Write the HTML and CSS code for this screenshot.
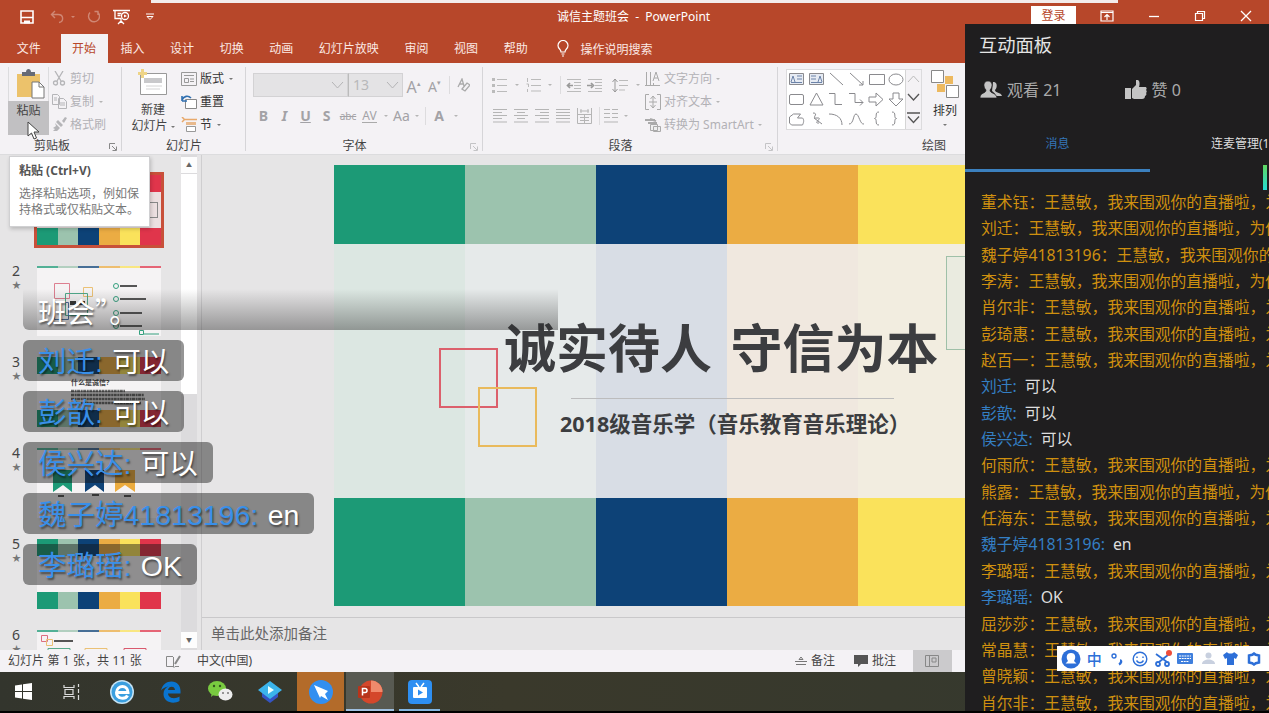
FILE: index.html
```html
<!DOCTYPE html>
<html lang="zh-CN">
<head>
    <meta charset="UTF-8">
    <meta name="viewport" content="width=device-width, initial-scale=1.0">
    <title>诚信主题班会 - PowerPoint</title>
    <link rel="stylesheet" href="styles.css">
</head>
<body>
<div class="desktop">
    <header class="titlebar">
        <div class="quick">
            <svg width="14" height="14" viewBox="0 0 14 14" fill="none" stroke="#fff" stroke-width="1.6"><path d="M1 1h12v12H1zM1 7.5h12"/><path d="M4 10.5h6v3H4z" fill="#fff" stroke="none"/></svg>
            <svg class="dim undo" width="14" height="14" viewBox="0 0 14 14" fill="none" stroke="#fff" stroke-width="1.4"><path d="M5 1L1.5 4.5 5 8M2 4.5h6c6 0 6 7 1 8"/></svg>
            <svg class="dim dot" width="6" height="4" viewBox="0 0 6 4" fill="#fff"><path d="M1 1h4L3 3z"/></svg>
            <svg class="dim redo" width="14" height="14" viewBox="0 0 14 14" fill="none" stroke="#fff" stroke-width="1.4"><path d="M8.500 1.500H12V5M11.500 2A5.500 5.500 0 1 1 4 2.500"/></svg>
            <svg class="show" width="17" height="16" viewBox="0 0 17 16" fill="none" stroke="#fff" stroke-width="1.3"><path d="M0 1.500h17M2 1.500v8h6M8 9v5M5 15l3-3 3 3M4.500 4.500h4M4.500 6.500h3"/><circle cx="12" cy="7" r="3.500"/><path d="M11 5.500l3 1.500-3 1.500z" fill="#fff" stroke="none"/></svg>
            <svg width="8" height="8" viewBox="0 0 8 8" fill="none" stroke="#fff"><path d="M0 1h8M1 3.500h6L4 6.500z"/></svg>
        </div>
        <div class="doc-name">诚信主题班会 &nbsp;- &nbsp;PowerPoint</div>
        <div class="window-buttons">
            <span class="login">登录</span>
            <svg width="14" height="12" viewBox="0 0 14 12" fill="none" stroke="#fff" stroke-width="1.2"><path d="M1 1h12v10H1zM1 2.500h12M7 10V4.500M4.500 7L7 4.500 9.500 7"/></svg>
            <svg width="12" height="12" viewBox="0 0 12 12" stroke="#fff" stroke-width="1.3"><path d="M1 6.500h10"/></svg>
            <svg width="12" height="12" viewBox="0 0 12 12" fill="none" stroke="#fff" stroke-width="1.2"><path d="M1.500 3.500h7v7h-7zM3.500 3V1.500h7v7H9"/></svg>
            <svg width="12" height="12" viewBox="0 0 12 12" stroke="#fff" stroke-width="1.3"><path d="M1 1l10 10M11 1L1 11"/></svg>
        </div>
    </header>
    <div class="share-strip"></div>

    <nav class="tabs">
        <span class="tab file">文件</span>
        <span class="tab active">开始</span>
        <span class="tab">插入</span>
        <span class="tab">设计</span>
        <span class="tab">切换</span>
        <span class="tab">动画</span>
        <span class="tab">幻灯片放映</span>
        <span class="tab">审阅</span>
        <span class="tab">视图</span>
        <span class="tab">帮助</span>
        <svg class="bulb" width="12" height="17" viewBox="0 0 12 17" fill="none" stroke="#fff" stroke-width="1.2"><path d="M4 12C4 9 1 9 1 5.500a5 5 0 0 1 10 0C11 9 8 9 8 12zM4.500 14h3M5 16h2"/></svg>
        <span>操作说明搜索</span>
    </nav>

    <section class="ribbon">
        <div class="group clipboard">
            <div class="group-body">
                <div class="paste">
                    <div class="paste-icon">
                        <svg width="28" height="30" viewBox="0 0 28 30"><path d="M0 5h23v23H0z" fill="#ecc26b"/><path d="M5 3h4c0-4 5-4 5 0h4v4H5z" fill="#666a76"/><path d="M15 13h7l5 5v11H15z" fill="#fff" stroke="#777"/><path d="M22 13v5h5" fill="none" stroke="#777"/></svg>
                    </div>
                    <div class="paste-label">粘贴</div>
                </div>
                <div class="commands off">
                    <div><svg width="15" height="15" viewBox="0 0 15 15" fill="none" stroke="#b5b5b8" stroke-width="1.300"><path d="M3 0l6 10M11 0L5 10"/><circle cx="3.500" cy="12" r="2"/><circle cx="10.500" cy="12" r="2"/></svg><span>剪切</span></div>
                    <div><svg width="15" height="15" viewBox="0 0 15 15" fill="none" stroke="#b5b5b8"><path d="M.5.500h5l2 2v8h-7zM6.500 4.500h5l3 3v7h-8z"/><path d="M8 9h5M8 11h5M2 4h3M2 6h3"/></svg><span>复制</span><b class="caret far"></b></div>
                    <div><svg width="15" height="15" viewBox="0 0 15 15" fill="#b5b5b8"><path d="M10 4l3-4 2 1-3 5zM6 3l5 5-2 2-5-5zM3 6l5 5-3 3H1l2-2-2-1 3-2z"/></svg><span>格式刷</span></div>
                </div>
            </div>
            <div class="group-name">剪贴板</div>
            <svg class="launcher" width="8" height="8" viewBox="0 0 8 8" fill="none" stroke="#888"><path d="M.5 6V.5H6M3 3l4 4M7.500 3.500v4h-4"/></svg>
        </div>

        <div class="group slides">
            <div class="group-body">
                <div class="new-slide">
                    <svg width="30" height="28" viewBox="0 0 30 28"><path d="M2.500 4.500h26v21h-26z" fill="#fff" stroke="#999"/><path d="M6 9h18v5H6z" fill="#c9c9cb"/><path d="M8 17h16M8 20h14" stroke="#d4d4d4"/><path d="M0 3h3V0h3v3h3v3H6v3H3V6H0z" fill="#eed487"/></svg>
                    <span>新建</span>
                    <span>幻灯片<b class="caret"></b></span>
                </div>
                <div class="commands">
                    <div><svg width="16" height="14" viewBox="0 0 16 14" fill="none" stroke="#999"><path d="M.5.500h15v13H.5zM3 3.500h10M3.500 6.500h4v4h-4zM9 7h4M9 9.500h4"/></svg><span>版式</span><b class="caret"></b></div>
                    <div><svg width="16" height="14" viewBox="0 0 16 14" fill="none"><path d="M4.500 4.500h11v9h-11z" fill="#fff" stroke="#888"/><path d="M1 6V1M1 6h5M1 5c2-4 6-5 9-2" stroke="#2f6fb0" stroke-width="1.600"/></svg><span>重置</span></div>
                    <div><svg width="16" height="15" viewBox="0 0 16 15" fill="none"><path d="M4 2.500h12M1 0l3 3M1 5l3-3" stroke="#e8a96b" stroke-width="1.500"/><path d="M5 5h10v3H5z" fill="#e8b98c"/><path d="M5.500 9.500h9v5h-9z" fill="#fff" stroke="#999"/></svg><span>节</span><b class="caret"></b></div>
                </div>
            </div>
            <div class="group-name">幻灯片</div>
        </div>

        <div class="group font">
            <div class="group-body rows">
                <div class="row font-row1">
                    <div class="combo"><svg width="13" height="8" viewBox="0 0 13 8" fill="none" stroke="#b4b4b6"><path d="M1 1l5.500 6L12 1"/></svg></div>
                    <div class="combo size">13<svg width="13" height="8" viewBox="0 0 13 8" fill="none" stroke="#b4b4b6"><path d="M1 1l5.500 6L12 1"/></svg></div>
                    <span class="grow">A<sup>▴</sup></span>
                    <span class="shrink">A<sup>▾</sup></span>
                    <i class="sep"></i>
                    <svg width="13" height="14" viewBox="0 0 13 14" fill="none" stroke="#aaa" stroke-width="1.300"><path d="M1 9L5 1l2 7M2.500 6h4M5 11l5-6 3 2-5 6z"/></svg>
                </div>
                <div class="row font-row2">
                    <b>B</b><b class="italic">I</b><b class="under">U</b><b>S</b><s>abc</s><span class="kern">AV</span><b class="caret"></b><span>Aa</span><b class="caret"></b><i class="sep"></i><b>A</b><b class="caret"></b>
                </div>
            </div>
            <div class="group-name">字体</div>
            <svg class="launcher" width="8" height="8" viewBox="0 0 8 8" fill="none" stroke="#c4c4c6"><path d="M.5 6V.5H6M3 3l4 4M7.500 3.500v4h-4"/></svg>
        </div>

        <div class="group paragraph">
            <div class="group-body">
                <div class="rows">
                    <div class="row par-row1">
                        <svg width="16" height="15" viewBox="0 0 16 15" stroke="#bbb"><path d="M5 1.500h10M5 7.500h10M5 13.500h10"/><path d="M0 1.500h3M0 7.500h3M0 13.500h3" stroke-width="3"/></svg>
                        <b class="caret"></b>
                        <svg width="16" height="14" viewBox="0 0 16 14" stroke="#bbb" fill="none"><path d="M5 1.500h10M5 7.500h10M5 13h10M1.500 0v4M.5 6h2v3M1.500 11v3"/></svg>
                        <b class="caret"></b>
                        <i class="sep"></i>
                        <svg width="16" height="15" viewBox="0 0 16 15" stroke="#bbb" fill="none"><path d="M1 1.500h14M8 4.500h7M8 7.500h7M8 10.500h7M1 13.500h14"/><path d="M7 7.500H2M4 5L1.500 7.500 4 10" stroke="#999" stroke-width="1.700"/></svg>
                        <svg width="16" height="15" viewBox="0 0 16 15" stroke="#bbb" fill="none"><path d="M1 1.500h14M8 4.500h7M8 7.500h7M8 10.500h7M1 13.500h14"/><path d="M0 7.500h5M4 5l2.500 2.500L4 10" stroke="#999" stroke-width="1.700"/></svg>
                        <svg width="16" height="15" viewBox="0 0 16 15" stroke="#bbb" fill="none"><path d="M7 2.500h9M7 7.500h9M7 12h6"/><path d="M3 1v13M.5 4L3 1l2.500 3M.5 11L3 14l2.500-3" stroke="#999"/></svg>
                        <b class="caret"></b>
                    </div>
                    <div class="row par-row2">
                        <svg width="15" height="16" viewBox="0 0 15 16" stroke="#b5b5b5"><path d="M0 1.500h14M0 4.500h9M0 7.500h14M0 10.500h9M0 14h14"/></svg>
                        <svg width="15" height="16" viewBox="0 0 15 16" stroke="#b5b5b5"><path d="M0 1.500h14M3 4.500h8M0 7.500h14M3 10.500h8M0 14h14"/></svg>
                        <svg width="15" height="16" viewBox="0 0 15 16" stroke="#b5b5b5"><path d="M0 1.500h14M5 4.500h9M0 7.500h14M5 10.500h9M0 14h14"/></svg>
                        <svg width="15" height="16" viewBox="0 0 15 16" stroke="#b5b5b5"><path d="M0 1.500h14M0 4.500h14M0 7.500h14M0 10.500h14M0 14h14"/></svg>
                        <svg width="15" height="16" viewBox="0 0 15 16" stroke="#b5b5b5" fill="none"><path d="M.5 0v15.500h14V0M.5 6.500h14M3 3h9M4 1v4M11 1v4M3 9.500h9M3 12.500h9M7.500 7v8"/></svg>
                        <i class="sep"></i>
                        <svg width="15" height="16" viewBox="0 0 15 16" stroke="#b5b5b5"><path d="M0 1.500h6M8 1.500h6M0 5.500h6M8 5.500h6M0 9.500h6M8 9.500h6M0 14h14"/></svg>
                        <b class="caret"></b>
                    </div>
                </div>
                <div class="commands off">
                    <div><svg width="16" height="16" viewBox="0 0 16 16" fill="none" stroke="#aaa"><path d="M1.500 1v13M5.500 1v13M0 14.500h15M8 10l3-9 3 9M9 7h4M8.500 12v3"/></svg><span>文字方向</span><b class="caret"></b></div>
                    <div><svg width="16" height="16" viewBox="0 0 16 16" fill="none" stroke="#aaa"><path d="M4 .5H.5v15H4M12 .5h3.500v15H12"/><path d="M8 2v12M5.500 5L8 2l2.500 3M5.500 11L8 14l2.500-3M4 8h8"/></svg><span>对齐文本</span><b class="caret"></b></div>
                    <div><svg width="16" height="14" viewBox="0 0 16 14" fill="none" stroke="#aaa"><path d="M0 2h10M3 5h9M5 1l6 2" stroke-width="2"/><path d="M5.500 6.500h7v6h-7zM8.500 8.500h7v5h-7z" fill="#eee"/></svg><span>转换为 SmartArt</span><b class="caret"></b></div>
                </div>
            </div>
            <div class="group-name">段落</div>
            <svg class="launcher" width="8" height="8" viewBox="0 0 8 8" fill="none" stroke="#c4c4c6"><path d="M.5 6V.5H6M3 3l4 4M7.500 3.500v4h-4"/></svg>
        </div>

        <div class="group drawing">
            <div class="group-body">
                <div class="gallery">
                    <svg width="118" height="59" viewBox="0 0 118 59" fill="none" stroke="#8a8a8e">
                        <path d="M2.500 3.500h14v11h-14zM22.500 3.500h14v11h-14z" fill="#e6ebf3"/>
                        <path d="M4 12l2-6 2 6M10 6h5M10 9h5M4 12.500h11M29 6h-5M29 9h-5M31 12l2-6 2 6M24 12.500h11" stroke="#6c83a8"/>
                        <path d="M43 3l13 12M63 3l13 12M76 11v4h-4M82.500 4.500h15v10h-15z"/>
                        <ellipse cx="109" cy="9.500" rx="7" ry="5.500"/>
                        <rect x="2.500" y="24.500" width="14" height="10" rx="1.500"/>
                        <path d="M29.500 23l6.500 12H23zM42 23.500h6v11h7M62 23.500h6v9h8M73 29.500l3 3-3 3M82 27h7v-4l7 6.500-7 6.500v-4h-7zM106 23h6v6h4l-7 7-7-7h4z"/>
                        <path d="M2.500 53v-6l4-3h7l-3 4h5c2 2 1 5 0 7h-11zM26 43c7 0-3 6 4 5s-5 6 2 5M27 48l8 6M42 44c8 0 13 4 13 11M62 54c5 0 4-10 7-10s4 11 8 10M92 42c-5 0-1 6-4.500 6.500C91 49 87 55 92 55M105 42c5 0 1 6 4.500 6.500C106 49 110 55 105 55"/>
                    </svg>
                    <div class="gallery-scroll">
                        <svg width="13" height="8" viewBox="0 0 13 8" fill="none" stroke="#bbb"><path d="M1 7l5.500-6L12 7"/></svg>
                        <svg width="13" height="8" viewBox="0 0 13 8" fill="none" stroke="#555" stroke-width="1.300"><path d="M1 1l5.500 6L12 1"/></svg>
                        <svg width="13" height="12" viewBox="0 0 13 12" fill="none" stroke="#555" stroke-width="1.300"><path d="M0 1h13M1 4.500l5.500 6 5.500-6"/></svg>
                    </div>
                </div>
                <div class="arrange">
                    <svg width="28" height="28" viewBox="0 0 28 28"><path d="M14 6h8v8h-8zM6 14h8v8H6z" fill="#edb95f"/><path d="M.5.500h12v12H.5zM15.500 15.500h12v12h-12z" fill="#fff" stroke="#888"/></svg>
                    <span>排列</span>
                    <b class="caret"></b>
                </div>
            </div>
            <div class="group-name">绘图</div>
        </div>
    </section>

    <main class="workspace">
        <aside class="thumbs">
            <div class="slide-item">
                <div class="num"></div>
                <div class="thumb cover selected"><div class="stripes"></div><div class="tiny-box"></div><div class="stripes"></div></div>
            </div>
            <div class="slide-item">
                <div class="num">2<small>★</small></div>
                <div class="thumb">
                    <div class="stripes thin"></div>
                    <svg width="124" height="68" viewBox="0 0 124 68" fill="none">
                        <path d="M17.500 15.500h15v15h-15z" stroke="#dd7f90"/><path d="M46.500 19.500h9v9h-9z" stroke="#ebc176"/><path d="M28.500 25.500h22v22h-22z" stroke="#4fa98a"/><path d="M17.500 34.500h14v17h-14z" stroke="#4a6c99"/>
                        <path d="M83 18h17M83 31h26M83 45h22M83 58h22" stroke="#555" stroke-width="2"/>
                        <g stroke="#35a07f"><circle cx="79" cy="18" r="2.500"/><circle cx="79" cy="31" r="2.500"/><circle cx="79" cy="45" r="2.500"/><circle cx="79" cy="58" r="2.500"/><path d="M102.500 62.500h4v4h-4zM107 66h15"/></g>
                        <path d="M33 35h6M42 35h6" stroke="#333" stroke-width="4"/>
                    </svg>
                </div>
            </div>
            <div class="slide-item">
                <div class="num">3<small>★</small></div>
                <div class="thumb cover">
                    <div class="stripes"></div>
                    <div class="tiny-text">什么是诚信?
                        <svg width="76" height="18" viewBox="0 0 76 18" stroke="#666" stroke-width="2.500" stroke-dasharray="3 .6 2 .5"><path d="M0 2h54M0 6h73M0 10h74M0 14h70"/></svg>
                    </div>
                    <div class="stripes"></div>
                </div>
            </div>
            <div class="slide-item">
                <div class="num">4<small>★</small></div>
                <div class="thumb">
                    <div class="stripes thin"></div>
                    <svg width="124" height="68" viewBox="0 0 124 68"><path d="M16 20h19v22l-9-7-10 7z" fill="#1d9b77"/><path d="M48 20h19v22l-9-7-10 7z" fill="#0f4378"/><path d="M78 20h20v22l-10-7-10 7z" fill="#ebab3e"/><path d="M21 46h6M55 45h7M87 46h7" stroke="#555" stroke-width="2"/></svg>
                </div>
            </div>
            <div class="slide-item">
                <div class="num">5<small>★</small></div>
                <div class="thumb cover"><div class="stripes"></div><div class="stripes"></div></div>
            </div>
            <div class="slide-item">
                <div class="num">6<small>★</small></div>
                <div class="thumb">
                    <div class="stripes thin"></div>
                    <svg width="124" height="68" viewBox="0 0 124 68" fill="none"><path d="M4.500 3.500h6v6h-6z" stroke="#dd6f80"/><path d="M9.500 7.500h6v6h-6z" stroke="#ebc176"/><path d="M17 9h19" stroke="#555" stroke-width="2"/><path d="M11 16.500h22v25H11z" stroke="#5aab8d"/><path d="M48 16.500h22v25H48z" stroke="#ebc176"/><path d="M87 16.500h22v25H87z" stroke="#d9596d"/></svg>
                </div>
            </div>
        </aside>
        <div class="scrollbar"><span>▲</span><div class="scroll-handle"></div><span class="down">▼</span></div>
        <div class="editor">
            <div class="canvas">
                <div class="slide">
                    <div class="stripes"></div>
                    <div class="slide-middle">
                        <h1>诚实待人 守信为本</h1>
                        <hr>
                        <h2>2018级音乐学（音乐教育音乐理论）</h2>
                        <i class="square red"></i>
                        <i class="square yellow"></i>
                        <i class="square green"></i>
                    </div>
                    <div class="stripes"></div>
                </div>
            </div>
            <div class="notes">单击此处添加备注</div>
        </div>
    </main>

    <footer class="statusbar">
        <span class="page">幻灯片 第 1 张，共 11 张</span>
        <svg class="spell" width="15" height="13" viewBox="0 0 15 13" fill="none" stroke="#888"><path d="M7 1.500H.5v10H7l1 1 1-1h4M7.500 2v10"/><path d="M14 1L9 9" stroke-width="2"/></svg>
        <span>中文(中国)</span>
        <div class="status-right">
            <svg width="12" height="10" viewBox="0 0 12 10" fill="none" stroke="#777"><path d="M4 3.500h4L6 1zM0 5.500h12M1 8.500h10"/></svg><span>备注</span>
            <svg class="comment" width="14" height="12" viewBox="0 0 14 12" fill="#555"><path d="M0 0h14v9H7l-3 3V9H0z"/></svg><span>批注</span>
            <div class="view"><svg width="14" height="12" viewBox="0 0 14 12" fill="none" stroke="#888"><path d="M.5.500h13v11H.5zM4.500 1v10M7 3h4v4H7z"/></svg></div>
        </div>
    </footer>

    <div class="taskbar">
        <div class="task start"><svg width="17" height="17" viewBox="0 0 17 17" fill="#fff"><path d="M0 2.500l7-1V8H0zM8 1.300L17 0v8H8zM0 9h7v6.500l-7-1zM8 9h9v8l-9-1.300z"/></svg></div>
        <div class="task"><svg width="18" height="16" viewBox="0 0 18 16" fill="none" stroke="#ddd" stroke-width="1.200"><path d="M1 1v2.500h10V1M1 15v-2.500h10V15M2 5.500h8v5H2zM15.500 0v3M15.500 5v4M15.500 11v5"/></svg></div>
        <div class="task"><svg width="24" height="24" viewBox="0 0 24 24"><circle cx="12" cy="12" r="12" fill="#c5e3f5"/><circle cx="12" cy="12" r="10.500" fill="#3b9fdf"/><path d="M6 12.500h12c0-8-11-8-11.500 0 0 7 9 7 11 3" fill="none" stroke="#fff" stroke-width="3"/></svg></div>
        <div class="task"><svg width="22" height="22" viewBox="0 0 22 22"><path d="M1 9.500C2.500 3.500 6.500.500 11.500.500c5.500 0 9 4 9 9.500v2.500H8c.3 5 7 6 11.500 3v4.500c-6 3.500-16 1.500-16-7 0-4 2-6.500 5-7.500C5 6 2.500 7.500 1 9.500zM8 9h7c0-4.500-6.500-4.500-7 0z" fill="#0a74cf" fill-rule="evenodd"/></svg></div>
        <div class="task"><svg width="25" height="21" viewBox="0 0 25 21"><path d="M3 16l1-5h5z" fill="#79ca40"/><ellipse cx="9" cy="7.500" rx="9" ry="7.500" fill="#79ca40"/><circle cx="6" cy="5" r="1.200" fill="#34561f"/><circle cx="12" cy="5" r="1.200" fill="#34561f"/><ellipse cx="17.500" cy="13.500" rx="7" ry="6" fill="#ededed"/><circle cx="15" cy="12" r="1" fill="#777"/><circle cx="20" cy="12" r="1" fill="#777"/></svg></div>
        <div class="task"><svg width="24" height="22" viewBox="0 0 24 22"><path d="M12 22l-8-6v-5h16v5z" fill="#3454c4"/><path d="M12 0l12 9-12 9L0 9z" fill="#3bb4ec"/><path d="M10 5l6 4-6 4z" fill="#e8ffff"/></svg></div>
        <div class="task ding"><svg width="24" height="24" viewBox="0 0 24 24"><circle cx="12" cy="12" r="12" fill="#338ff0"/><path d="M5 5l14 6-3 3 3 6-7-4-1 2z" fill="#fff"/></svg></div>
        <div class="task ppt"><svg width="26" height="24" viewBox="0 0 26 24"><circle cx="14" cy="12" r="11.500" fill="#d4472b"/><path d="M14 .5A11.500 11.500 0 0 1 25.500 12H14z" fill="#f08a6c"/><rect x="1" y="6" width="12" height="12" rx="1" fill="#b8341b"/><path d="M5.500 15.500v-7h2.500a2 2 0 0 1 0 4H5.500" fill="none" stroke="#fff" stroke-width="1.500"/></svg></div>
        <div class="task live"><svg width="24" height="24" viewBox="0 0 24 24"><rect width="24" height="24" rx="4" fill="#2e8ff2"/><path d="M8 3l3 4M16 3l-3 4" stroke="#fff" stroke-width="1.500"/><rect x="5" y="7" width="14" height="11" rx="1" fill="#fff"/><path d="M10 9.500l5 3-5 3z" fill="#2e8ff2"/></svg></div>
    </div>

    <div class="tooltip">
        <strong>粘贴 (Ctrl+V)</strong>
        <p>选择粘贴选项，例如保<br>持格式或仅粘贴文本。</p>
    </div>
    <svg class="cursor" width="13" height="19" viewBox="0 0 13 19"><path d="M1 1v14l3.500-3 2.500 6 2.500-1-2.500-6H12z" fill="#fff" stroke="#444"/></svg>

    <!-- 弹幕 -->
    <div class="danmaku">
        <div class="bubble fade">班会”。</div>
        <div class="bubble"><b>刘迁:</b> 可以</div>
        <div class="bubble"><b>彭歆:</b> 可以</div>
        <div class="bubble"><b>侯兴达:</b> 可以</div>
        <div class="bubble"><b>魏子婷41813196:</b> en</div>
        <div class="bubble"><b>李璐瑶:</b> OK</div>
    </div>

    <!-- 互动面板 -->
    <section class="panel">
        <h3>互动面板</h3>
        <div class="stats">
            <div><svg width="22" height="18" viewBox="0 0 22 18" fill="#c4c4c4"><path d="M13 1c4-1 5 5 2 8 0 3 6 2 7 6h-6c-1-3-3-4-4-5z"/><path d="M8 0c5 0 5 6 2 9 0 4 6 2 7 8H0c0-6 6-4 6-8C3 6 3 0 8 0z" stroke="#1f1e1f" stroke-width=".7"/></svg>观看 21</div>
            <div><svg width="22" height="20" viewBox="0 0 22 20" fill="#c4c4c4"><path d="M0 8h6v11H0zM7 9l4-4V0c4-1 4 4 3 7h6c2 0 2 2 1 3 1 1 1 2 0 3 1 1 0 3-1 3 0 2-1 3-3 3H9l-2-1z"/></svg>赞 0</div>
        </div>
        <div class="panel-tabs"><span class="current">消息</span><span>连麦管理(1)</span></div>
        <i class="volume"></i>
        <div class="messages">
            <p>董术钰：王慧敏，我来围观你的直播啦，为你点赞</p>
            <p>刘迁：王慧敏，我来围观你的直播啦，为你点赞</p>
            <p>魏子婷41813196：王慧敏，我来围观你的直播啦，为你点赞</p>
            <p>李涛：王慧敏，我来围观你的直播啦，为你点赞</p>
            <p>肖尔非：王慧敏，我来围观你的直播啦，为你点赞</p>
            <p>彭琦惠：王慧敏，我来围观你的直播啦，为你点赞</p>
            <p>赵百一：王慧敏，我来围观你的直播啦，为你点赞</p>
            <p class="said"><b>刘迁:</b>可以</p>
            <p class="said"><b>彭歆:</b>可以</p>
            <p class="said"><b>侯兴达:</b>可以</p>
            <p>何雨欣：王慧敏，我来围观你的直播啦，为你点赞</p>
            <p>熊露：王慧敏，我来围观你的直播啦，为你点赞</p>
            <p>任海东：王慧敏，我来围观你的直播啦，为你点赞</p>
            <p class="said"><b>魏子婷41813196:</b>en</p>
            <p>李璐瑶：王慧敏，我来围观你的直播啦，为你点赞</p>
            <p class="said"><b>李璐瑶:</b>OK</p>
            <p>屈莎莎：王慧敏，我来围观你的直播啦，为你点赞</p>
            <p>常晶慧：王慧敏，我来围观你的直播啦，为你点赞</p>
            <p>曾晓颖：王慧敏，我来围观你的直播啦，为你点赞</p>
            <p>肖尔非：王慧敏，我来围观你的直播啦，为你点赞</p>
        </div>
    </section>

    <!-- 输入法工具条 -->
    <div class="ime">
        <svg width="20" height="20" viewBox="0 0 20 20"><circle cx="10" cy="10" r="9.500" fill="#2d6fd8"/><path d="M10 4c5 0 5 5 3 8l2.500 2.500h-11L7 12C5 9 5 4 10 4z" fill="#fff"/></svg>
        <span>中</span>
        <svg width="12" height="14" viewBox="0 0 12 14" fill="none" stroke="#2d6fd8" stroke-width="1.400"><circle cx="3" cy="4" r="2"/><path d="M9 8.500c2 0 1 3-1 4" stroke-width="2.500"/></svg>
        <svg width="16" height="16" viewBox="0 0 16 16" fill="none" stroke="#2d6fd8" stroke-width="1.400"><circle cx="8" cy="8" r="6.800"/><path d="M5 5.500v1.500M11 5.500v1.500M4.500 9.500c2 3 5 3 7 0"/></svg>
        <svg width="18" height="18" viewBox="0 0 18 18" fill="none" stroke="#2d6fd8" stroke-width="1.800"><path d="M2 4l11 8M14 5L5 12"/><circle cx="4" cy="14" r="2"/><circle cx="13" cy="14" r="2"/><circle cx="15" cy="3" r="3" fill="#ee4d3a" stroke="none"/></svg>
        <svg width="16" height="13" viewBox="0 0 16 13"><rect y="1" width="16" height="11" rx="1" fill="#3f7fdd"/><path d="M2 4h12M2 6.500h12M4 9.500h8" stroke="#fff" stroke-dasharray="2 .7"/></svg>
        <svg width="13" height="13" viewBox="0 0 13 13" fill="#c8d0df"><circle cx="6.500" cy="3.500" r="3"/><path d="M0 12c0-6 13-6 13 0z"/></svg>
        <svg width="15" height="13" viewBox="0 0 15 13" fill="#2d6fd8"><path d="M4 0c1 2 6 2 7 0l4 3-2 4-2-1v7H4V6L2 7 0 3z"/></svg>
        <svg width="14" height="14" viewBox="0 0 14 14" fill="none" stroke="#2d6fd8" stroke-width="2.500"><path d="M7 1.500l1.800 1.300 3.200.7v7l-3.200.7L7 12.500l-1.800-1.300L2 10.500v-7l3.200-.7z"/></svg>
    </div>
</div>
</body>
</html>
```

FILE: styles.css
```css
* {
    box-sizing: border-box;
}
body {
    margin: 0;
    overflow: hidden;
    background: #000;
    font-family: "Noto Sans", "Noto Sans CJK SC", sans-serif;
    font-size: 12px;
    color: #444;
}
svg {
    display: block;
    flex: none;
}
p, h1, h2, h3 {
    margin: 0;
}
.desktop {
    position: relative;
    width: 1269px;
    height: 713px;
    overflow: hidden;
    display: flex;
    flex-direction: column;
    white-space: nowrap;
}

/* title bar */
.titlebar {
    height: 34px;
    flex: none;
    display: flex;
    align-items: center;
    background: #b7472a;
    color: #fff;
    line-height: 19px;
}
.doc-name {
    margin-top: -2px;
}
.share-strip {
    position: absolute;
    left: 151px;
    top: 0;
    width: 967px;
    height: 3px;
    background: #f3eceb;
}
.quick {
    display: flex;
    align-items: center;
    width: 557px;
    padding-left: 20px;
}
.dim {
    opacity: .35;
}
.undo {
    margin-left: 16px;
}
.dot {
    margin-left: 6px;
}
.redo {
    margin-left: 10px;
}
.show {
    margin: 0 16px 0 13px;
}
.window-buttons {
    display: flex;
    align-items: center;
    margin-left: auto;
    gap: 34px;
    padding: 0 17px 3px 0;
}
.login {
    width: 45px;
    height: 20px;
    margin: 0 -10px 0 0;
    background: #fff;
    color: #b7472a;
    text-align: center;
}

/* ribbon tabs */
.tabs {
    display: flex;
    align-items: center;
    height: 29px;
    flex: none;
    padding-left: 4px;
    background: #b7472a;
    color: #fbe9e4;
}
.tab {
    padding: 0 12.8px;
    line-height: 29px;
}
.tab.file {
    margin-right: 7px;
}
.tab.active {
    padding: 0 11.5px;
    background: #f4f2f4;
    color: #b7472a;
}
.bulb {
    margin: 0 12px 0 16px;
}

/* ribbon */
.ribbon {
    display: flex;
    height: 92px;
    flex: none;
    background: #f4f2f5;
    border-bottom: 1px solid #dcdcde;
    line-height: 16px;
}
.group {
    position: relative;
    display: flex;
    flex-direction: column;
    flex: none;
    padding-top: 4px;
}
.group::after {
    content: "";
    position: absolute;
    right: 0;
    top: 4px;
    width: 1px;
    height: 84px;
    background: #d6d5d8;
}
.group-body {
    display: flex;
    height: 71px;
}
.group-name {
    padding-top: 1px;
    text-align: center;
}
.launcher {
    position: absolute;
    right: 5px;
    bottom: 3px;
}
.clipboard {
    width: 122px;
}
.clipboard .group-name {
    padding-right: 18px;
}
.slides {
    width: 124px;
}
.font {
    width: 237px;
}
.font .group-name {
    padding-right: 20px;
}
.paragraph {
    width: 295px;
}
.paragraph .group-name {
    padding-right: 20px;
}
.drawing {
    width: 312px;
}
.drawing::after {
    display: none;
}
.caret {
    display: inline-block;
    width: 0;
    height: 0;
    flex: none;
    border: 2.5px solid transparent;
    border-top-color: #777;
    border-bottom: 0;
    margin-left: 4px;
    vertical-align: middle;
}
.caret.far {
    margin-left: 10px;
}
.off {
    color: #b2b1b5;
}
.off .caret, .row .caret {
    border-top-color: #b5b5b5;
}
.paste {
    width: 41px;
    height: 68px;
    margin-left: 8px;
    border: 1px solid #dcdcde;
    border-top: 0;
}
.paste-icon {
    height: 34px;
    padding: 2px 0 0 8px;
}
.paste-label {
    height: 34px;
    margin: 0 -1px;
    background: #c1c0c2;
    text-align: center;
    line-height: 19px;
}
.commands {
    display: flex;
    flex-direction: column;
    margin-left: 3px;
}
.commands div {
    display: flex;
    align-items: center;
    height: 23px;
    gap: 3px;
}
.commands .caret {
    margin-left: 2px;
}
.new-slide {
    display: flex;
    flex-direction: column;
    align-items: center;
    width: 50px;
    margin-left: 6px;
    padding-top: 2px;
}
.new-slide svg {
    margin-bottom: 5px;
}
.new-slide .caret {
    margin-left: 3px;
}
.slides .commands {
    margin-left: 3px;
    color: #333;
}
.rows {
    display: flex;
    flex-direction: column;
    gap: 7px;
    padding: 6px 0 0 7px;
}
.row {
    display: grid;
    align-items: center;
    justify-items: center;
    height: 24px;
    color: #a3a2a6;
    font-size: 14px;
}
.row .caret {
    margin: 0;
}
.font-row1 {
    grid-template-columns: 95px 55px 21px 21px 8px 20px;
}
.font-row2 {
    grid-template-columns: 21px 21px 21px 21px 22px 21px 11px 21px 9px 8px 20px 14px;
}
.par-row1 {
    grid-template-columns: 19px 15px 19px 14px 6px 21px 21px 30px 6px;
}
.par-row2 {
    grid-template-columns: 21px 21px 21px 21px 21px 8px 17px 12px;
}
.combo {
    display: flex;
    align-items: center;
    justify-content: flex-end;
    width: 100%;
    height: 24px;
    padding-right: 3px;
    background: #e4e3e5;
    border: 1px solid #d3d2d4;
}
.combo.size {
    justify-content: space-between;
    padding-left: 4px;
    border-left-color: #bbb;
    color: #b8b8ba;
}
.grow {
    font-size: 16px;
}
.row sup {
    font-size: 7px;
    vertical-align: 7px;
}
.sep {
    width: 1px;
    height: 18px;
    background: #dddcde;
}
.italic {
    font-style: italic;
}
.under {
    text-decoration: underline;
}
.row s {
    font-size: 10px;
}
.kern {
    font-size: 12px;
    line-height: 13px;
    border-bottom: 1px solid #aaa;
}
.paragraph .commands {
    margin-left: 4px;
}
.paragraph .commands .caret {
    margin-left: 1px;
}
.gallery {
    display: flex;
    width: 136px;
    height: 61px;
    margin: 2px 0 0 8px;
    background: #fff;
    border: 1px solid #dcdbdd;
}
.gallery-scroll {
    display: flex;
    flex-direction: column;
    align-items: center;
    justify-content: space-around;
    width: 17px;
    background: #f4f2f5;
    border-left: 1px solid #d5d5d5;
}
.arrange {
    display: flex;
    flex-direction: column;
    align-items: center;
    margin-left: 9px;
    padding-top: 3px;
    color: #333;
}
.arrange span {
    margin: 5px 0 5px;
}
.arrange .caret {
    margin: 0;
}
.drawing .group-name {
    width: 312px;
}

/* work area */
.workspace {
    display: flex;
    height: 495px;
    flex: none;
    background: #e6e5e6;
}
.stripes {
    flex: none;
    background: linear-gradient(to right, #1c9a76 0 16.67%, #9cc3ae 0 33.33%, #0d4277 0 50%, #ebac43 0 66.67%, #fae25b 0 83.33%, #e0354b 0);
}
.thumbs {
    width: 181px;
    padding-top: 19px;
    overflow: hidden;
}
.slide-item {
    display: flex;
    height: 91px;
}
.num {
    width: 37px;
    padding-left: 12px;
    font-size: 14px;
    line-height: 11px;
}
.num small {
    display: block;
    font-size: 9px;
    line-height: 18px;
    color: #777;
}
.thumb {
    width: 124px;
    height: 70px;
    margin-top: 1px;
    background: #f5f3f4;
}
.thumb .stripes {
    height: 17px;
}
.thumb .stripes.thin {
    height: 2px;
    opacity: .75;
}
.thumb.cover {
    display: flex;
    flex-direction: column;
    justify-content: space-between;
}
.thumb.selected {
    outline: 3px solid #c8503a;
    background: #ecdfe0;
}
.tiny-box {
    align-self: flex-end;
    width: 12px;
    height: 16px;
    margin-right: 3px;
    border: 1px solid #888;
}
.tiny-text {
    padding-left: 34px;
    font-size: 7px;
    font-weight: bold;
    line-height: 12px;
}
.scrollbar {
    display: flex;
    flex-direction: column;
    width: 16px;
    background: #dcdbdd;
    text-align: center;
    font-size: 6px;
    line-height: 16px;
    color: #666;
}
.scrollbar span {
    height: 16px;
    margin-top: 2px;
    background: #fdfdfd;
}
.scrollbar .down {
    margin: auto 0 2px;
}
.scroll-handle {
    height: 220px;
    margin-top: 1px;
    background: #fff;
}
.editor {
    flex: 1;
    margin-left: 4px;
    border-left: 1px solid #cfced0;
}
.canvas {
    height: 463px;
    padding: 10px 0 0 132px;
    border-bottom: 1px solid #c9c8ca;
}
.slide {
    width: 786px;
    height: 441px;
}
.slide > .stripes {
    height: 79px;
}
.slide > .stripes:last-child {
    height: 108px;
}
.slide-middle {
    position: relative;
    height: 254px;
    padding-top: 67px;
    background: linear-gradient(to right, #dce7e2 0 16.67%, #e6eaea 0 33.33%, #d8dde5 0 50%, #f0e8df 0 66.67%, #f2ede0 0);
    color: #3c3d40;
}
.slide h1 {
    padding-left: 170px;
    font-size: 52px;
    line-height: 74px;
    font-weight: bold;
    word-spacing: 5px;
}
.slide hr {
    width: 323px;
    height: 1px;
    margin: 13px 0 11px 237px;
    border: 0;
    background: #bcbcbd;
}
.slide h2 {
    padding-left: 226px;
    font-size: 21.5px;
    line-height: 28px;
}
.square {
    position: absolute;
    width: 59px;
    height: 60px;
    border: 2px solid #dc606c;
}
.square.red {
    left: 105px;
    top: 104px;
}
.square.yellow {
    left: 144px;
    top: 143px;
    border-color: #e9ba5c;
}
.square.green {
    left: 612px;
    top: 12px;
    height: 94px;
    border: 1px solid #9fc0a8;
    background: #eaebe0;
}
.notes {
    padding-left: 9px;
    font-size: 14.5px;
    line-height: 30px;
    color: #666;
}

/* status bar */
.statusbar {
    display: flex;
    align-items: center;
    height: 22px;
    flex: none;
    padding-left: 8px;
    background: #f4f2f5;
    line-height: 22px;
}
.page {
    width: 158px;
    word-spacing: .3px;
}
.spell {
    margin-right: 16px;
}
.status-right {
    display: flex;
    align-items: center;
    gap: 4px;
    width: 474px;
    margin-left: auto;
}
.comment {
    margin-left: 15px;
}
.view {
    width: 39px;
    height: 22px;
    margin-left: 13px;
    padding: 5px 12px;
    background: #cbcacc;
}

/* task bar */
.taskbar {
    display: flex;
    height: 39px;
    flex: none;
    background: linear-gradient(to right, #33352d, #3a392b 40%, #34392f);
}
.task {
    display: flex;
    align-items: center;
    justify-content: center;
    width: 49.5px;
}
.start {
    width: 47.5px;
}
.ding {
    width: 47px;
    margin-left: 2px;
    background: #b36b2a;
}
.ppt {
    width: 48px;
    margin-left: 2px;
    background: #585a52;
    box-shadow: inset 0 -2px #9fc0e0;
}
.live {
    width: 41px;
    margin-left: 5px;
    box-shadow: inset 0 -2px #83b5df;
}

/* floating layers */
.tooltip {
    position: absolute;
    left: 9px;
    top: 156px;
    width: 141px;
    height: 71px;
    padding: 6px 9px;
    background: #fff;
    border: 1px solid #d0d0d2;
    box-shadow: 1px 2px 4px rgba(0, 0, 0, 0.2);
    line-height: 16px;
    color: #555;
}
.tooltip p {
    margin-top: 7px;
    color: #777;
}
.cursor {
    position: absolute;
    left: 27px;
    top: 121px;
}
.danmaku {
    position: absolute;
    left: 23px;
    top: 289px;
    display: flex;
    flex-direction: column;
    align-items: flex-start;
    gap: 10px;
    font-family: "Liberation Sans", "Noto Sans CJK SC", sans-serif;
    font-size: 28.5px;
    line-height: 45px;
    color: #fff;
    text-shadow: 1px 2px 2px rgba(0, 0, 0, 0.5);
}
.bubble {
    height: 41px;
    padding: 0 15px;
    border-radius: 6px;
    background: rgba(20, 20, 20, 0.45);
}
.bubble b {
    margin-right: 1.5px;
    font-weight: normal;
    color: #398fe8;
}
.bubble.fade {
    width: 535px;
    border-radius: 0 0 0 6px;
    background: linear-gradient(rgba(40, 40, 40, 0), rgba(40, 40, 40, 0.42));
    font-family: "Noto Sans CJK SC", sans-serif;
    line-height: 43px;
}

/* live panel */
.panel {
    position: absolute;
    left: 965px;
    top: 24px;
    width: 304px;
    height: 687px;
    overflow: hidden;
    background: #1f1e1f;
    color: #ccc;
}
.panel h3 {
    padding: 9px 0 0 14px;
    font-size: 18.3px;
    font-weight: normal;
    line-height: 24px;
    color: #e5e5e5;
}
.stats {
    display: flex;
    padding: 21px 0 0 15px;
    font-size: 16px;
    line-height: 24px;
    color: #aaa;
}
.stats div {
    display: flex;
    align-items: center;
    gap: 5px;
    width: 145px;
}
.panel-tabs {
    display: flex;
    margin-top: 28px;
    line-height: 27px;
}
.panel-tabs span {
    width: 185px;
    height: 42px;
    flex: none;
    padding-left: 61px;
    color: #ddd;
}
.panel-tabs .current {
    padding: 0;
    text-align: center;
    border-bottom: 3px solid #3b80be;
    color: #3476b8;
}
.volume {
    position: absolute;
    left: 298px;
    top: 141px;
    width: 4px;
    height: 25px;
    background: linear-gradient(#60d860, #25dcd5);
}
.messages {
    padding: 17px 0 0 16px;
    font-size: 15.8px;
    line-height: 26.35px;
    color: #cf900f;
}
.messages p {
    height: 26.35px;
}
.said {
    color: #ddd;
}
.said b {
    margin-right: 8px;
    font-weight: normal;
    color: #347fc4;
}

.ime {
    position: absolute;
    left: 1057px;
    top: 646px;
    display: grid;
    grid-template-columns: repeat(9, 22.8px);
    align-items: center;
    justify-items: center;
    width: 212px;
    height: 25px;
    padding-left: 3px;
    background: #fff;
    color: #2d6fd8;
    font-size: 15px;
    line-height: 24px;
}
.ime span {
    font-weight: 500;
}
```
